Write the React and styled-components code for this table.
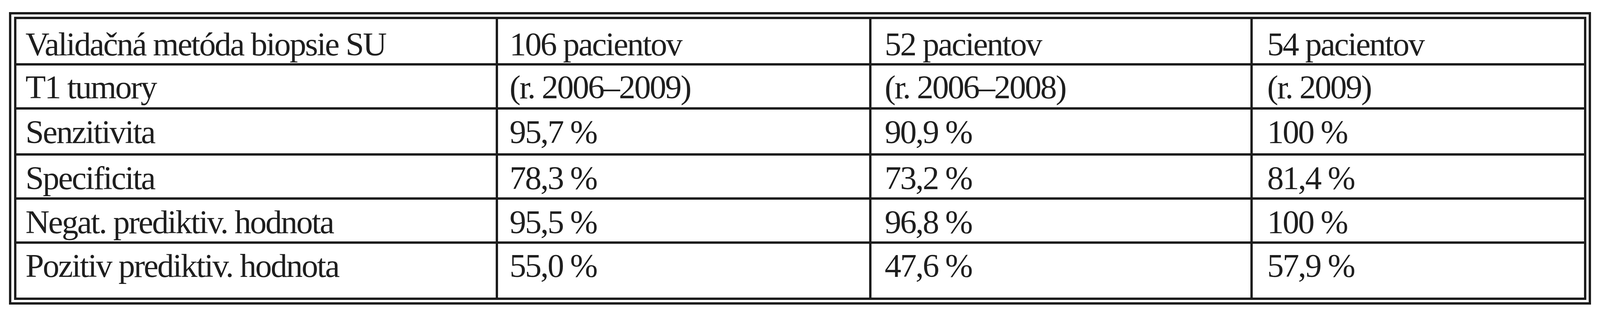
import styled, { createGlobalStyle } from 'styled-components';

const GlobalStyle = createGlobalStyle`
  html, body {
    margin: 0;
    padding: 0;
    background: #ffffff;
    overflow: hidden;
  }
`;

const LINE = '#1c1c1c';

// the scan was laid out on a 4519px wide sheet; widths follow the viewport
const W = 4519;
const vw = (px) => `calc(100vw * ${px} / ${W})`;

const rows = [
  ['Validačná metóda biopsie SU', '106 pacientov', '52 pacientov', '54 pacientov'],
  ['T1 tumory', '(r. 2006–2009)', '(r. 2006–2008)', '(r. 2009)'],
  ['Senzitivita', '95,7 %', '90,9 %', '100 %'],
  ['Specificita', '78,3 %', '73,2 %', '81,4 %'],
  ['Negat. prediktiv. hodnota', '95,5 %', '96,8 %', '100 %'],
  ['Pozitiv prediktiv. hodnota', '55,0 %', '47,6 %', '57,9 %'],
];

// left padding per column, top padding per row
const colPad = [26, 32, 37, 41];
const rowPad = [22, 13, 15, 15, 15, 14];

const App = () => {
  return (
    <>
      <GlobalStyle />
      <Page>
        <OuterFrame>
          <TableGrid>
            {rows.map((row, r) =>
              row.map((text, c) => (
                <Cell key={`${r}-${c}`} $pl={colPad[c]} $pt={rowPad[r]}>
                  {text}
                </Cell>
              ))
            )}
          </TableGrid>
        </OuterFrame>
      </Page>
    </>
  );
};

export default App;

const Page = styled.div`
  width: 100vw;
  height: 800px;
  padding: 31px 0 0 ${vw(25)};
  box-sizing: border-box;
  background: #ffffff;
`;

const OuterFrame = styled.div`
  width: ${vw(4469)};
  height: 750px;
  box-sizing: border-box;
  border: 6px solid ${LINE};
  padding: 6px 6px 7px 7px;
  background: #ffffff;
`;

const TableGrid = styled.div`
  display: grid;
  grid-template-columns: 1356fr 1049fr 1071fr 937fr;
  grid-template-rows: 113px 107px 112px 107px 107px 138px;
  gap: 6px;
  border: 6px solid ${LINE};
  background: ${LINE};
`;

const Cell = styled.div`
  min-width: 0;
  background: #ffffff;
  padding: ${(p) => p.$pt}px 0 0 ${(p) => vw(p.$pl)};
  font-family: 'Liberation Serif', 'Times New Roman', serif;
  font-size: 85px;
  letter-spacing: calc((100vw - ${W}px) * 0.0071);
  line-height: 1;
  color: #1e1e1e;
  white-space: nowrap;
  overflow: hidden;
`;
